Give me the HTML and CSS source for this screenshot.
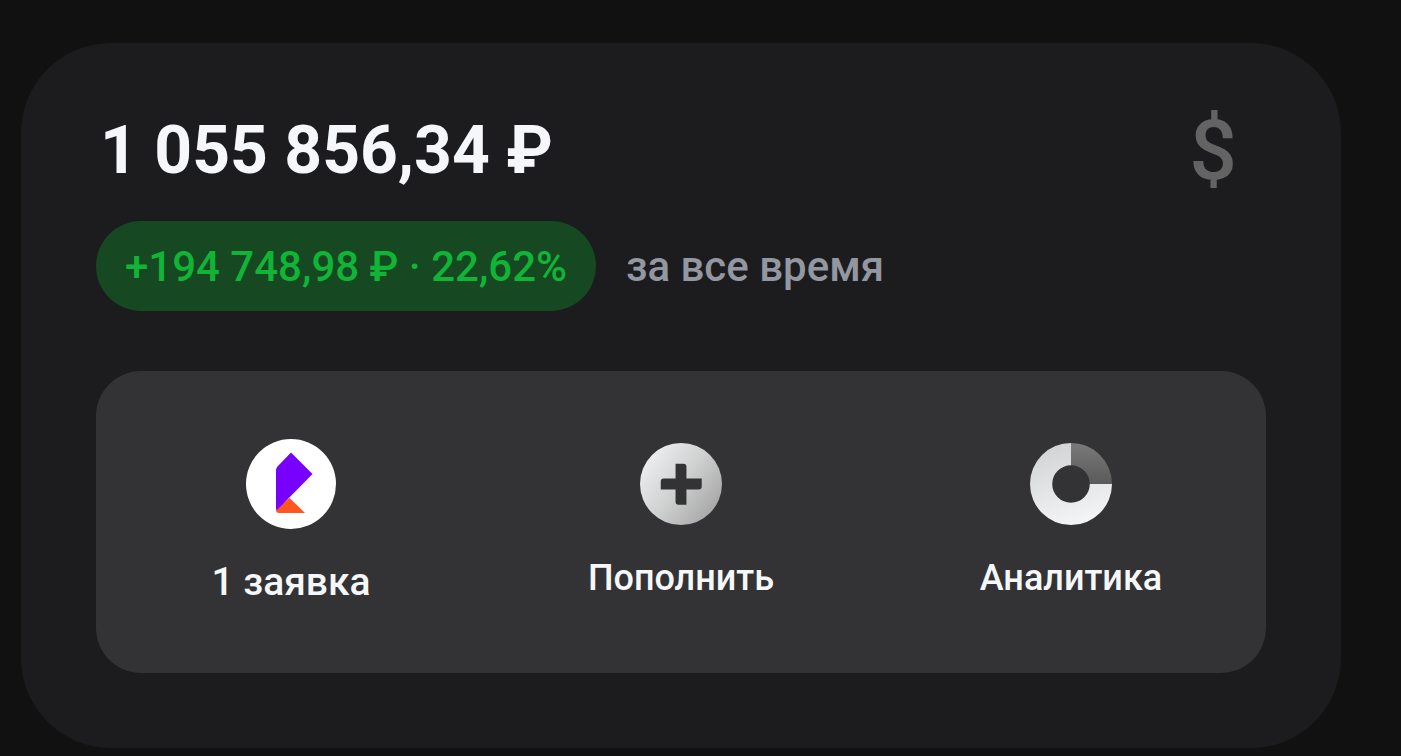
FILE: index.html
```html
<!DOCTYPE html>
<html lang="ru">
<head>
    <meta charset="UTF-8">
    <meta name="viewport" content="width=device-width, initial-scale=1.0">
    <title>Портфель</title>
    <link rel="stylesheet" href="styles.css">
</head>
<body>

<main class="card">
    <!-- Сумма и выбор валюты -->
    <header class="card-header">
        <h1 class="amount">1 055 856,34 ₽</h1>
        <button class="currency-btn" type="button">$</button>
    </header>

    <!-- Доходность -->
    <div class="profit">
        <button class="profit-badge" type="button">+194 748,98 ₽ · 22,62%</button>
        <span class="profit-period">за все время</span>
    </div>

    <!-- Действия -->
    <nav class="actions">
        <button class="action action-order" type="button">
            <svg class="action-icon" viewBox="0 0 90 90" aria-hidden="true">
                <circle cx="45" cy="45" r="45" fill="#fff"/>
                <path d="M30 69.5 43.5 59 59 74H33q-3 0-3-3z" fill="#ff5520"/>
                <path d="M45 13.5 66.5 35 31 71q-1-1-1-2V31q0-2 1.5-3.5z" fill="#7700ff"/>
            </svg>
            <span class="action-label">1 заявка</span>
        </button>
        <button class="action" type="button">
            <svg class="action-icon" viewBox="0 0 83 83" aria-hidden="true">
                <defs>
                    <linearGradient id="plusFill" x1="0.1" y1="0.2" x2="0.9" y2="0.8">
                        <stop offset="0" stop-color="#ebeced"/>
                        <stop offset="0.5" stop-color="#cfd0d0"/>
                        <stop offset="1" stop-color="#a8a9a8"/>
                    </linearGradient>
                </defs>
                <circle cx="41.5" cy="41.5" r="41.5" fill="url(#plusFill)"/>
                <path d="M36 21h8q3 0 3 3v12h15.5v8q0 3-3 3H47v15.500h-8q-3 0-3-3V47H21v-8q0-3 3-3h12z" fill="#333335"/>
            </svg>
            <span class="action-label">Пополнить</span>
        </button>
        <button class="action" type="button">
            <svg class="action-icon" viewBox="0 0 83 83" aria-hidden="true">
                <defs>
                    <linearGradient id="ringFill" x1="0.3" y1="0" x2="0.6" y2="1">
                        <stop offset="0" stop-color="#d2d3d4"/>
                        <stop offset="1" stop-color="#f4f5f6"/>
                    </linearGradient>
                    <linearGradient id="sliceFill" x1="0" y1="0" x2="0" y2="1">
                        <stop offset="0" stop-color="#7a7a7b"/>
                        <stop offset="1" stop-color="#5a5a5b"/>
                    </linearGradient>
                </defs>
                <path d="M41.5 0A41.5 41.5 0 1 0 83 41.5H60.5A19 19 0 1 1 41.5 22.5z" fill="url(#ringFill)"/>
                <path d="M41.5 0A41.5 41.5 0 0 1 83 41.5H60.5A19 19 0 0 0 41.5 22.5z" fill="url(#sliceFill)"/>
            </svg>
            <span class="action-label">Аналитика</span>
        </button>
    </nav>
</main>

</body>
</html>
```

FILE: styles.css
```css
* {
    box-sizing: border-box;
}

body {
    margin: 0;
    padding: 43px 60px 8px 21px;
    background-color: #111111;
    color: #f6f7fa;
    font-family: Roboto, "Noto Sans", sans-serif;
}

button {
    margin: 0;
    padding: 0;
    border: none;
    background: none;
    color: inherit;
    font: inherit;
    cursor: pointer;
}

.card {
    padding: 66px 75px 75px;
    border-radius: 90px;
    background-color: #1c1c1e;
}

/* Верхняя строка */
.card-header {
    display: flex;
    justify-content: space-between;
    align-items: center;
    padding: 0 29px 0 4px;
    margin-bottom: 28px;
}

.amount {
    margin: 0;
    font-size: 66px;
    font-weight: 700;
    line-height: 84px;
}

.currency-btn {
    color: #636364;
    font-size: 84px;
    font-weight: 500;
    line-height: 84px;
}

/* Доходность */
.profit {
    display: flex;
    align-items: center;
    gap: 30px;
    margin-bottom: 60px;
    font-size: 42px;
    font-weight: 500;
    line-height: 88px;
}

.profit-badge {
    padding: 2px 29px 0;
    border-radius: 45px;
    background-color: #164822;
    color: #10b436;
}

.profit-period {
    padding-top: 2px;
    color: #9397a2;
}

/* Панель действий */
.actions {
    display: grid;
    grid-template-columns: repeat(3, 1fr);
    align-items: center;
    padding: 68px 0;
    border-radius: 45px;
    background-color: #333335;
}

.action {
    display: flex;
    flex-direction: column;
    align-items: center;
    gap: 30px;
    font-size: 36px;
    font-weight: 500;
    line-height: 46px;
}

.action-icon {
    width: 82px;
    height: 82px;
}

.action-order {
    font-size: 39px;
}

.action-order .action-icon {
    width: 90px;
    height: 90px;
}
```
